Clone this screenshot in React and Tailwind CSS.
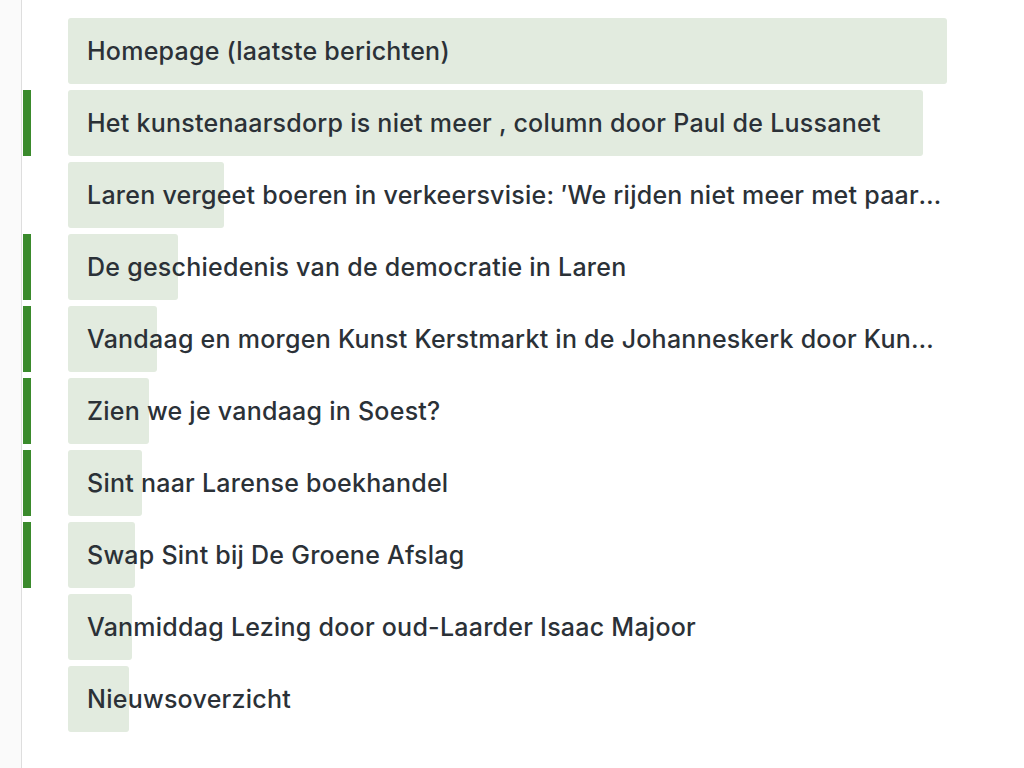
import React from 'react';

// breedte van de groene achtergrond per item (px), en of het item gemarkeerd is
const items = [
    { title: 'Homepage (laatste berichten)', fill: 879, marked: false },
    { title: 'Het kunstenaarsdorp is niet meer , column door Paul de Lussanet', fill: 855, marked: true },
    { title: 'Laren vergeet boeren in verkeersvisie: \u2032We rijden niet meer met paard en wagen\u2032', fill: 156, marked: false },
    { title: 'De geschiedenis van de democratie in Laren', fill: 110, marked: true },
    { title: 'Vandaag en morgen Kunst Kerstmarkt in de Johanneskerk door Kunstenaars uit Laren', fill: 89, marked: true },
    { title: 'Zien we je vandaag in Soest?', fill: 81, marked: true },
    { title: 'Sint naar Larense boekhandel', fill: 74, marked: true },
    { title: 'Swap Sint bij De Groene Afslag', fill: 67, marked: true },
    { title: 'Vanmiddag Lezing door oud-Laarder Isaac Majoor', fill: 64, marked: false },
    { title: 'Nieuwsoverzicht', fill: 61, marked: false },
];

const Row = ({ title, fill, marked }) => (
    <div className="flex h-[66px] items-stretch">
        <div className={`ml-px w-[8px] ${marked ? 'bg-[#3a8a2c]' : ''}`} />
        <div className="relative ml-[37px] w-[879px] flex items-center">
            <div className="absolute left-0 top-0 h-full rounded-[3px] bg-[#e2ebdf]" style={{ width: fill }} />
            <span className="relative block truncate pl-[19px] pt-[2px] text-[25px] font-medium text-[#2b3137] tracking-[0.25px]">
                {title}
            </span>
        </div>
    </div>
);

export default function App() {
    return (
        <div className="flex min-h-screen bg-white" style={{ fontFamily: 'Inter, "Noto Sans", sans-serif' }}>
            <div className="w-[22px] shrink-0 bg-[#fafafa] border-r border-[#dedede]" />
            <div className="flex flex-col gap-[6px] pt-[18px]">
                {items.map((it) => (
                    <Row key={it.title} {...it} />
                ))}
            </div>
        </div>
    );
}
